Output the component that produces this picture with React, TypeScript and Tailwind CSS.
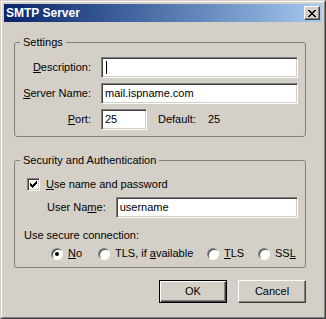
import React from "react";

// 3D borders used by the classic controls
const sunken =
  "border border-t-[#808080] border-l-[#808080] border-r-white border-b-white shadow-[inset_1px_1px_0_#404040,inset_-1px_-1px_0_#d4d0c8]";
const raised =
  "border border-t-white border-l-white border-r-[#404040] border-b-[#404040] shadow-[inset_-1px_-1px_0_#808080]";

function TextBox({ value, caret, className = "" }: { value?: string; caret?: boolean; className?: string }) {
  return (
    <div className={`h-[21px] bg-white flex items-center pl-[3px] text-black ${sunken} ${className}`}>
      {caret && <span className="w-px h-[13px] bg-black ml-[1px]" />}
      {value}
    </div>
  );
}

function Radio({ checked }: { checked?: boolean }) {
  return (
    <span
      className={`w-[12px] h-[12px] shrink-0 rounded-full bg-white flex items-center justify-center border border-t-[#808080] border-l-[#808080] border-r-white border-b-white shadow-[inset_1px_1px_0_#404040]`}
    >
      {checked && <span className="w-[4px] h-[4px] rounded-full bg-black" />}
    </span>
  );
}

function Label({ children, className = "" }: { children: React.ReactNode; className?: string }) {
  return <span className={`leading-[13px] whitespace-nowrap ${className}`}>{children}</span>;
}

export default function App() {
  return (
    <div className="w-[326px] h-[319px] bg-[#d4d0c8] text-[11px] text-black font-['Liberation_Sans',Arial,sans-serif] border border-t-[#d4d0c8] border-l-[#d4d0c8] border-r-[#404040] border-b-[#404040]">
      <div className="h-full flex flex-col p-[2px] border border-t-white border-l-white border-r-[#808080] border-b-[#808080]">
        {/* タイトルバー */}
        <div className="h-[18px] shrink-0 flex items-center justify-between pl-[2px] pr-[2px] bg-linear-to-r from-[#0a246a] to-[#a6caf0]">
          <span className="text-white font-bold text-[12px] leading-[14px]">SMTP Server</span>
          <div className={`w-[16px] h-[14px] bg-[#d4d0c8] flex items-center justify-center ${raised}`}>
            <svg width="8" height="7" viewBox="0 0 8 7" shapeRendering="crispEdges">
              <path d="M0 0h2v1h-2zM6 0h2v1h-2zM1 1h2v1h-2zM5 1h2v1h-2zM2 2h4v1h-4zM3 3h2v1h-2zM2 4h4v1h-4zM1 5h2v1h-2zM5 5h2v1h-2zM0 6h2v1h-2zM6 6h2v1h-2z" fill="#000" />
            </svg>
          </div>
        </div>

        <div className="flex flex-col pl-[10px] pt-[14px]">
          {/* Settings */}
          <fieldset className="w-[292px] border border-[#808080] rounded-[3px] pt-[8px] pb-[6px] pr-[7px]">
            <legend className="ml-[5px] px-[3px] leading-[13px]">Settings</legend>
            <div className="grid grid-cols-[76px_1fr] gap-x-[10px] gap-y-[5px] items-center">
              <Label className="text-right">
                <u>D</u>escription:
              </Label>
              <TextBox caret />
              <Label className="text-right">
                <u>S</u>erver Name:
              </Label>
              <TextBox value="mail.ispname.com" />
              <Label className="text-right">
                <u>P</u>ort:
              </Label>
              <div className="flex items-center">
                <TextBox value="25" className="w-[46px]" />
                <Label className="ml-[11px] w-[50px]">Default:</Label>
                <Label>25</Label>
              </div>
            </div>
          </fieldset>

          {/* Security and Authentication */}
          <fieldset className="w-[292px] mt-[17px] border border-[#808080] rounded-[3px] pt-[11px] pb-[7px] pr-[7px]">
            <legend className="ml-[5px] px-[3px] leading-[13px]">Security and Authentication</legend>
            <div className="flex items-center pl-[12px] gap-[6px]">
              <span className={`w-[13px] h-[13px] bg-white flex items-center justify-center ${sunken}`}>
                <svg width="7" height="7" viewBox="0 0 7 7" shapeRendering="crispEdges">
                  <path d="M6 0h1v3h-1zM5 1h1v3h-1zM4 2h1v3h-1zM3 3h1v3h-1zM2 4h1v3h-1zM1 3h1v3h-1zM0 2h1v3h-1z" fill="#000" />
                </svg>
              </span>
              <Label>
                <u>U</u>se name and password
              </Label>
            </div>
            <div className="flex items-center pl-[32px] gap-[10px] mt-[6px]">
              <Label>
                User Na<u>m</u>e:
              </Label>
              <TextBox value="username" className="flex-1" />
            </div>
            <Label className="block pl-[9px] mt-[11px]">Use secure connection:</Label>
            <div className="flex items-center pl-[36px] mt-[5px]">
              <div className="w-[47px] flex items-center gap-[5px]">
                <Radio checked />
                <Label>
                  <u>N</u>o
                </Label>
              </div>
              <div className="w-[109px] flex items-center gap-[5px]">
                <Radio />
                <Label>
                  TLS, if <u>a</u>vailable
                </Label>
              </div>
              <div className="w-[51px] flex items-center gap-[5px]">
                <Radio />
                <Label>
                  <u>T</u>LS
                </Label>
              </div>
              <div className="flex items-center gap-[5px]">
                <Radio />
                <Label>
                  SS<u>L</u>
                </Label>
              </div>
            </div>
          </fieldset>

          {/* ボタン */}
          <div className="w-[292px] flex justify-end gap-[11px] mt-[12px]">
            <button className="w-[68px] h-[23px] border border-black bg-[#d4d0c8] shadow-[inset_1px_1px_0_white,inset_-1px_-1px_0_#404040,inset_-2px_-2px_0_#808080]">
              OK
            </button>
            <button className={`w-[68px] h-[23px] bg-[#d4d0c8] ${raised}`}>Cancel</button>
          </div>
        </div>
      </div>
    </div>
  );
}
